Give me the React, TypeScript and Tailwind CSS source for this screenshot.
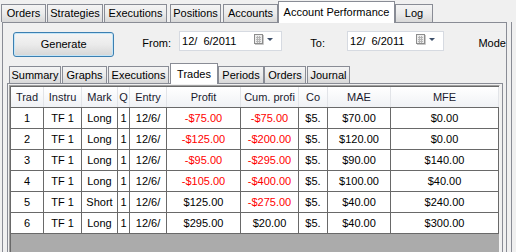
import React from "react";

const topTabs = [
  { label: "Orders", cls: "w-[45px] ml-px" },
  { label: "Strategies", cls: "w-[56px] ml-px" },
  { label: "Executions", cls: "w-[63px] ml-px" },
  { label: "Positions", cls: "w-[51px] ml-[3px]" },
  { label: "Accounts", cls: "w-[55px] ml-[2px]" },
  { label: "Account Performance", cls: "w-[117px]", active: true },
  { label: "Log", cls: "w-[38px]" },
];

const subTabs = [
  { label: "Summary", cls: "w-[52px] ml-[2px]" },
  { label: "Graphs", cls: "w-[45px] ml-px" },
  { label: "Executions", cls: "w-[61px] ml-px" },
  { label: "Trades", cls: "w-[48px] ml-px", active: true },
  { label: "Periods", cls: "w-[46px]" },
  { label: "Orders", cls: "w-[42px]" },
  { label: "Journal", cls: "w-[43px] ml-px" },
];

const cols = [
  { head: "Trad", cls: "w-[33px]" },
  { head: "Instru", cls: "w-[38px]" },
  { head: "Mark", cls: "w-[36px]" },
  { head: "Q", cls: "w-[12px]" },
  { head: "Entry", cls: "w-[37px]" },
  { head: "Profit", cls: "w-[74px]" },
  { head: "Cum. profi", cls: "w-[58px]" },
  { head: "Co", cls: "w-[29px]" },
  { head: "MAE", cls: "w-[63px]" },
  { head: "MFE", cls: "w-[108px]" },
];

const rows = [
  ["1", "TF 1", "Long", "1", "12/6/", "-$75.00", "-$75.00", "$5.", "$70.00", "$0.00"],
  ["2", "TF 1", "Long", "1", "12/6/", "-$125.00", "-$200.00", "$5.", "$120.00", "$0.00"],
  ["3", "TF 1", "Long", "1", "12/6/", "-$95.00", "-$295.00", "$5.", "$90.00", "$140.00"],
  ["4", "TF 1", "Long", "1", "12/6/", "-$105.00", "-$400.00", "$5.", "$100.00", "$40.00"],
  ["5", "TF 1", "Short", "1", "12/6/", "$125.00", "-$275.00", "$5.", "$40.00", "$240.00"],
  ["6", "TF 1", "Long", "1", "12/6/", "$295.00", "$20.00", "$5.", "$40.00", "$300.00"],
];

function Tab({ label, cls, active, tall }: { label: string; cls: string; active?: boolean; tall: string }) {
  if (active) {
    return (
      <div
        className={`${cls} ${tall} relative z-10 -mb-px flex items-start justify-center pt-[2px] border border-b-0 border-[#898c95] bg-white`}
      >
        {label}
      </div>
    );
  }
  return (
    <div
      className={`${cls} flex items-center justify-center border border-b-0 border-[#898c95] bg-linear-to-b from-[#f4f4f4] via-[#ebebeb] to-[#d8d8d8]`}
    >
      {label}
    </div>
  );
}

function CalendarIcon() {
  return (
    <svg width="20" height="11" viewBox="0 0 20 11">
      <rect x="0.5" y="0.5" width="8" height="9" fill="#ececec" stroke="#8c8c8c" />
      <path d="M2 3.5h5M2 5.5h5M2 7.5h5M3.5 2v7M5.5 2v7" stroke="#b5b5b5" strokeWidth="1" />
      <path d="M1 10.5h8.5V1" stroke="#c8c8c8" fill="none" />
      <polygon points="13,4 19,4 16,7" fill="#3d4f6a" />
    </svg>
  );
}

function DateBox({ w }: { w: string }) {
  return (
    <div className={`${w} h-[20px] mt-[8px] flex items-start justify-between bg-white border border-[#d6dae1] pl-[2px] pr-[7px]`}>
      <span className="leading-[14px] pt-[2px]">12/&nbsp;&nbsp;6/2011</span>
      <span className="pt-[2px]">
        <CalendarIcon />
      </span>
    </div>
  );
}

export default function App() {
  return (
    <div className="w-[516px] h-[252px] overflow-hidden bg-[#f0f0f0] text-[11px] text-black font-['Liberation_Sans',Arial,sans-serif]">
      {/* main tab strip */}
      <div className="h-[22px] flex items-end">
        {topTabs.map((t) => (
          <div key={t.label} className={t.active ? "" : "h-[18px] flex"}>
            <Tab label={t.label} cls={t.active ? t.cls : `${t.cls} h-[18px]`} active={t.active} tall="h-[22px]" />
          </div>
        ))}
      </div>

      <div className="flex h-[230px]">
        {/* outer page */}
        <div className="ml-[2px] w-[505px] flex flex-col border border-b-0 border-[#898c95]">
          {/* toolbar row */}
          <div className="h-[40px] flex items-start shrink-0">
            <button className="ml-[10px] mt-[9px] w-[102px] h-[25px] rounded-[3px] border border-[#3c7fb1] bg-linear-to-b from-[#f5f5f5] via-[#ebebeb] to-[#d6d6d6] shadow-[inset_0_0_0_1px_#c4e5f7]">
              Generate
            </button>
            <span className="ml-[28px] w-[37px] mt-[13px] leading-[14px]">From:</span>
            <DateBox w="w-[104px]" />
            <span className="ml-[28px] w-[37px] mt-[13px] leading-[14px]">To:</span>
            <DateBox w="w-[98px]" />
            <span className="ml-[34px] mt-[13px] leading-[14px] whitespace-nowrap">Mode</span>
          </div>

          {/* inner tab control */}
          <div className="ml-[4px] w-[496px] flex-1 flex flex-col min-h-0">
            <div className="h-[20px] flex items-end shrink-0">
              {subTabs.map((t) => (
                <div key={t.label} className={t.active ? "" : "h-[17px] flex"}>
                  <Tab label={t.label} cls={t.active ? t.cls : `${t.cls} h-[17px]`} active={t.active} tall="h-[21px]" />
                </div>
              ))}
            </div>
            <div className="flex-1 border border-b-0 border-[#898c95] pl-px pt-px min-h-0">
              {/* grid */}
              <div className="w-[491px] h-full border-l border-t border-r border-[#a0a0a0] border-r-[#f4f4f4] bg-[#ababab]">
                <div className="h-full border-l border-t border-[#696969]">
                  <div className="flex h-[21px] border-b border-[#696969] bg-linear-to-b from-white to-[#f0f2f5]">
                    {cols.map((c) => (
                      <div
                        key={c.head}
                        className={`${c.cls} shrink-0 border-r border-[#e2e4e8] flex items-center justify-center overflow-hidden whitespace-nowrap text-[#1a1a2e]`}
                      >
                        {c.head}
                      </div>
                    ))}
                  </div>
                  {rows.map((r) => (
                    <div key={r[0]} className="flex h-[21px] border-b border-[#696969] bg-white">
                      {r.map((v, i) => (
                        <div
                          key={i}
                          className={`${cols[i].cls} shrink-0 border-r border-[#696969] flex items-center justify-center overflow-hidden whitespace-nowrap ${
                            v.startsWith("-") ? "text-[#ff0000]" : "text-black"
                          }`}
                        >
                          {v}
                        </div>
                      ))}
                    </div>
                  ))}
                </div>
              </div>
            </div>
          </div>
        </div>
        <div className="ml-[4px] w-px bg-[#898c95]" />
      </div>
    </div>
  );
}
